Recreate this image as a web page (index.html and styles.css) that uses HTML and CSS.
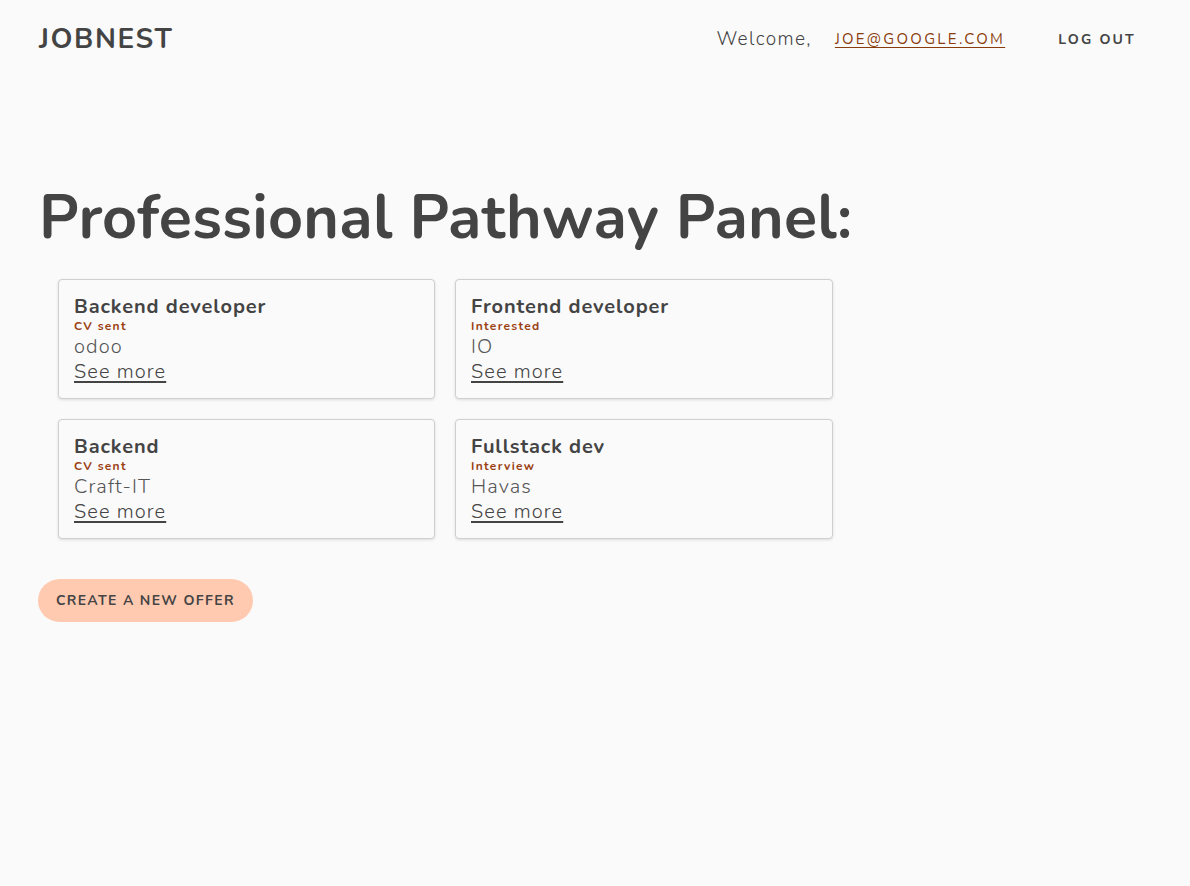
FILE: index.html
```html
<!DOCTYPE html>
<html lang="en">
<head>
<meta charset="utf-8">
<title>JobNest</title>
<link rel="stylesheet" href="styles.css">
</head>
<body>
<header class="topbar">
  <div class="brand">JOBNEST</div>
  <nav class="user">
    <span class="welcome">Welcome,</span>
    <a class="email" href="#">JOE@GOOGLE.COM</a>
    <a class="logout" href="#">LOG OUT</a>
  </nav>
</header>
<main class="content">
  <h1 class="title">Professional Pathway Panel:</h1>
  <section class="grid">
    <article class="card">
      <h2 class="card-title">Backend developer</h2>
      <div class="status">CV sent</div>
      <div class="company">odoo</div>
      <a class="more" href="#">See more</a>
    </article>
    <article class="card">
      <h2 class="card-title">Frontend developer</h2>
      <div class="status">Interested</div>
      <div class="company">IO</div>
      <a class="more" href="#">See more</a>
    </article>
    <article class="card">
      <h2 class="card-title">Backend</h2>
      <div class="status">CV sent</div>
      <div class="company">Craft-IT</div>
      <a class="more" href="#">See more</a>
    </article>
    <article class="card">
      <h2 class="card-title">Fullstack dev</h2>
      <div class="status">Interview</div>
      <div class="company">Havas</div>
      <a class="more" href="#">See more</a>
    </article>
  </section>
  <button class="create">CREATE A NEW OFFER</button>
</main>
</body>
</html>
```
FILE: styles.css
```css
html, body {
  margin: 0;
  padding: 0;
  background: #fafafa;
  color: #444444;
  font-family: "Nunito", "Lato", "Noto Sans", sans-serif;
}
.topbar {
  display: flex;
  align-items: center;
  justify-content: space-between;
  height: 78px;
  padding: 0 54px 0 39px;
}
.brand {
  font-size: 28px;
  font-weight: 700;
  letter-spacing: 1.6px;
  color: #444;
}
.user {
  display: flex;
  align-items: center;
}
.welcome {
  font-size: 19px;
  font-weight: 300;
  letter-spacing: 1.4px;
  margin-right: 23px;
}
.email {
  font-size: 15px;
  color: #8a3c0c;
  letter-spacing: 2.3px;
  text-decoration: underline;
  text-underline-offset: 3px;
  margin-right: 53px;
}
.logout {
  font-size: 14px;
  font-weight: 700;
  letter-spacing: 2.2px;
  color: #444;
  text-decoration: none;
}
.content {
  padding: 0 39px;
}
.title {
  margin: 101px 0 0;
  font-size: 61px;
  font-weight: 700;
  line-height: 78px;
  letter-spacing: 0.25px;
  color: #444;
}
.grid {
  display: grid;
  grid-template-columns: 377px 378px;
  gap: 20px;
  margin: 22px 0 0 19px;
}
.card {
  box-sizing: border-box;
  height: 120px;
  padding: 15px 15px 0;
  border: 1px solid #cfcfcf;
  border-radius: 4px;
  background: #fafafa;
  box-shadow: 0 1px 3px rgba(0,0,0,0.12);
  display: flex;
  flex-direction: column;
}
.card-title {
  margin: 0;
  font-size: 20px;
  font-weight: 700;
  line-height: 24px;
  letter-spacing: 0.9px;
  color: #444;
}
.status {
  font-size: 12px;
  font-weight: 700;
  line-height: 15px;
  letter-spacing: 1.3px;
  color: #9a4012;
}
.company {
  font-size: 20px;
  font-weight: 300;
  line-height: 25px;
  letter-spacing: 1.1px;
  color: #555;
}
.more {
  font-size: 20px;
  font-weight: 300;
  line-height: 25px;
  letter-spacing: 1.1px;
  color: #444;
  align-self: flex-start;
  text-decoration: underline;
  text-underline-offset: 3px;
}
.create {
  margin: 40px 0 0 -1px;
  height: 43px;
  padding: 0 18px;
  border: none;
  border-radius: 22px;
  background: #ffcab0;
  color: #444;
  font-family: inherit;
  font-size: 14px;
  font-weight: 700;
  letter-spacing: 1.35px;
  cursor: pointer;
}
```
